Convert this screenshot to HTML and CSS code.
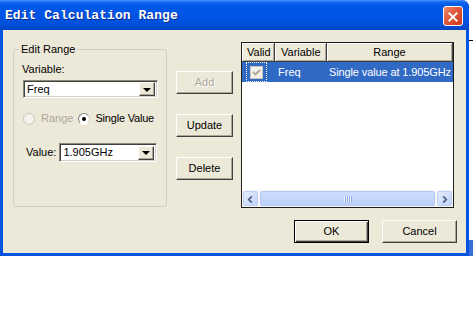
FILE: index.html
```html
<!DOCTYPE html>
<html>
<head>
<meta charset="utf-8">
<link rel="stylesheet" href="styles.css">
</head>
<body>
<div class="screen">
  <div class="window">
    <div class="titlebar">
      <span class="title">Edit Calculation Range</span>
      <span class="close">
        <svg width="20" height="20" viewBox="0 0 20 20">
          <path d="M6 6 L14 14 M14 6 L6 14" stroke="#fff" stroke-width="2.2" stroke-linecap="square"/>
        </svg>
      </span>
    </div>
    <div class="client">
      <fieldset class="group">
        <legend class="legend">Edit Range</legend>
        <div class="lbl var-lbl">Variable:</div>
        <div class="combo combo-var">
          <span class="combo-text">Freq</span>
          <span class="drop"><span class="tri"></span></span>
        </div>
        <div class="radios">
          <span class="radio disabled"></span><span class="rlabel disabled-text">Range</span>
          <span class="radio checked"><span class="dot"></span></span><span class="rlabel">Single Value</span>
        </div>
        <div class="value-row">
          <span class="lbl">Value:</span>
          <div class="combo combo-val">
            <span class="combo-text">1.905GHz</span>
            <span class="drop"><span class="tri"></span></span>
          </div>
        </div>
      </fieldset>
      <div class="btncol">
        <div class="btn disabled-btn">Add</div>
        <div class="btn">Update</div>
        <div class="btn">Delete</div>
      </div>
      <div class="rightcol">
        <div class="list">
          <div class="lhead">
            <div class="hcell c1">Valid</div>
            <div class="hcell c2">Variable</div>
            <div class="hcell c3 center">Range</div>
          </div>
          <div class="lrow">
            <div class="cell c1"><span class="focus"><span class="chk"><svg width="11" height="11" viewBox="0 0 11 11"><path d="M2 5 L4.5 7.5 L9 3" fill="none" stroke="#a9a796" stroke-width="1.8"/></svg></span></span></div>
            <div class="cell c2">Freq</div>
            <div class="cell c3">Single value at 1.905GHz</div>
          </div>
          <div class="lspace"></div>
          <div class="hscroll">
            <span class="sbtn"><svg width="15" height="15" viewBox="0 0 15 15"><path d="M9 4 L5.5 7.5 L9 11" fill="none" stroke="#4d6185" stroke-width="2"/></svg></span>
            <span class="thumb"><span class="grip"></span></span>
            <span class="sbtn"><svg width="15" height="15" viewBox="0 0 15 15"><path d="M6 4 L9.5 7.5 L6 11" fill="none" stroke="#4d6185" stroke-width="2"/></svg></span>
          </div>
        </div>
        <div class="actions">
          <div class="btn okbtn"><span>OK</span></div>
          <div class="btn cancel">Cancel</div>
        </div>
      </div>
    </div>
  </div>
  <div class="behind"></div>
</div>
</body>
</html>
```

FILE: styles.css
```css
* { box-sizing: border-box; }
body {
  margin: 0;
  background: #fff;
  font-family: "Liberation Sans", Arial, sans-serif;
  font-size: 11px;
  color: #000;
}
.screen { display: flex; width: 473px; }
.window {
  width: 469px;
  height: 256px;
  background: #0553e1;
  border-radius: 0 7px 0 0;
  display: flex;
  flex-direction: column;
}
.titlebar {
  height: 30px;
  display: flex;
  align-items: center;
  justify-content: space-between;
  padding: 1px 6px 0 5px;
  border-radius: 0 7px 0 0;
  background: linear-gradient(#4a9bff 0, #1468ee 2px, #0058e8 6px, #0054e3 18px, #004ed8 25px, #0043c4 30px);
}
.title {
  font-family: "Liberation Mono", "DejaVu Sans Mono", monospace;
  font-weight: bold;
  font-size: 13px;
  color: #fff;
  text-shadow: 1px 1px 0 #0a2a8a;
  letter-spacing: 0.05px;
}
.close {
  width: 20px;
  height: 20px;
  border: 1px solid #fff;
  border-radius: 3px;
  background: linear-gradient(135deg, #f08c6c 0, #e0583a 45%, #c8381c 100%);
  display: flex;
}
.client {
  flex: 1;
  margin: 0 3px 3px 3px;
  background: #ece9d8;
  display: flex;
  align-items: flex-start;
  padding-left: 10px;
  white-space: nowrap;
}
.group {
  margin: 13px 0 0 0;
  width: 154px;
  height: 164px;
  padding: 0 8px;
  border: 1px solid #d0d0bf;
  border-radius: 3px;
  min-width: 0;
}
.legend {
  padding: 0 2px;
  margin-left: -3px;
  line-height: 13px;
}
.lbl { line-height: 13px; }
.var-lbl { margin-top: 7px; }
.combo {
  display: flex;
  align-items: center;
  background: #fff;
  border-top: 1px solid #8a8877;
  border-left: 1px solid #8a8877;
  border-right: 1px solid #fff;
  border-bottom: 1px solid #fff;
  box-shadow: inset 1px 1px 0 #404040, inset -1px -1px 0 #d4d0c8;
}
.combo-var { margin: 4px 0 0 1px; width: 135px; height: 18px; }
.combo-text { flex: 1; padding-left: 3px; line-height: 13px; }
.drop {
  width: 16px;
  height: 14px;
  margin-right: 2px;
  background: #ece9d8;
  border-top: 1px solid #fff;
  border-left: 1px solid #fff;
  border-right: 1px solid #404040;
  border-bottom: 1px solid #404040;
  box-shadow: inset -1px -1px 0 #aca899;
  display: flex;
  align-items: center;
  justify-content: center;
}
.tri {
  width: 0;
  height: 0;
  border-left: 4px solid transparent;
  border-right: 4px solid transparent;
  border-top: 4px solid #000;
  margin-top: 1px;
}
.radios {
  display: flex;
  align-items: center;
  margin-top: 14px;
  height: 13px;
}
.radio {
  width: 12px;
  height: 12px;
  border-radius: 50%;
  margin-left: 1px;
  display: flex;
  align-items: center;
  justify-content: center;
  flex: none;
}
.radio.disabled {
  border: 1px solid #cac8bb;
  background: #f4f3ee;
}
.radio.checked {
  margin-left: 5px;
  border: 1px solid;
  border-color: #808080 #d4d0c8 #fff #808080;
  background: #fff;
}
.dot { width: 4px; height: 4px; border-radius: 50%; background: #000; }
.rlabel { margin-left: 6px; line-height: 13px; }
.rlabel:last-child { margin-left: 5px; letter-spacing: -0.2px; }
.disabled-text { color: #aca899; }
.value-row {
  display: flex;
  align-items: center;
  margin-top: 18px;
  padding-left: 4px;
}
.combo-val { margin-left: 3px; width: 98px; height: 19px; }
.btncol {
  margin: 41px 0 0 9px;
  display: flex;
  flex-direction: column;
  gap: 20px;
}
.btn {
  width: 57px;
  height: 23px;
  display: flex;
  align-items: center;
  justify-content: center;
  background: #ece9d8;
  border-top: 1px solid #fff;
  border-left: 1px solid #fff;
  border-right: 1px solid #404040;
  border-bottom: 1px solid #404040;
  box-shadow: inset -1px -1px 0 #aca899;
  line-height: 13px;
}
.disabled-btn { color: #aca899; text-shadow: 1px 1px 0 #fff; }
.rightcol {
  margin: 12px 0 0 8px;
  display: flex;
  flex-direction: column;
}
.list {
  width: 213px;
  height: 166px;
  background: #fff;
  border: 1px solid #1d1d1d;
  display: flex;
  flex-direction: column;
}
.lhead { display: flex; height: 19px; }
.hcell {
  display: flex;
  align-items: center;
  background: #ece9d8;
  border-right: 1px solid #404040;
  border-bottom: 1px solid #404040;
  box-shadow: inset 1px 1px 0 #fff, inset -1px -1px 0 #aca899;
  line-height: 13px;
  padding-left: 5px;
}
.c1 { width: 33px; flex: none; }
.c2 { width: 52px; flex: none; }
.c3 { width: 126px; flex: none; overflow: hidden; }
.hcell.c2 { padding-left: 6px; }
.center { justify-content: center; padding-left: 0; }
.lrow { display: flex; height: 20px; background: #316ac5; color: #fff; }
.cell { display: flex; align-items: center; line-height: 13px; }
.cell.c1 { padding-left: 4px; }
.cell.c2 { padding-left: 3px; }
.cell.c3 { padding-left: 2px; letter-spacing: -0.12px; }
.focus {
  width: 21px;
  height: 20px;
  outline: 1px dotted #ffffff;
  outline-offset: -1px;
  display: flex;
  align-items: center;
  justify-content: center;
}
.chk {
  width: 13px;
  height: 13px;
  border: 1px solid #cac8bb;
  background: #f2f1ea;
  display: flex;
  align-items: center;
  justify-content: center;
}
.lspace { flex: 1; }
.hscroll {
  height: 17px;
  display: flex;
  align-items: center;
  gap: 2px;
  padding: 0 1px;
  background: #f6f6f2;
}
.sbtn {
  width: 15px;
  height: 15px;
  border: 1px solid #bccdf6;
  border-radius: 2px;
  background: linear-gradient(135deg, #e4ecfd, #c1d3fb);
  display: flex;
}
.thumb {
  flex: 1;
  height: 15px;
  border: 1px solid #b4c8f6;
  border-radius: 2px;
  background: linear-gradient(#cddcfd, #bcd0fb);
  display: flex;
  align-items: center;
  justify-content: center;
}
.grip {
  width: 8px;
  height: 6px;
  background: repeating-linear-gradient(90deg, #eef3fe 0 1px, #8faaea 1px 2px);
}
.actions {
  display: flex;
  margin-top: 12px;
  margin-left: 53px;
  gap: 13px;
}
.okbtn, .cancel { width: 75px; }
.okbtn {
  border: 1px solid #000;
  box-shadow: inset 1px 1px 0 #fff, inset -1px -1px 0 #404040, inset -2px -2px 0 #aca899;
}
.behind {
  width: 4px;
  height: 256px;
  background: linear-gradient(#fff 0 40px, #000 40px 41px, #fff 41px 240px, #3a6fd8 240px 256px);
}
```
